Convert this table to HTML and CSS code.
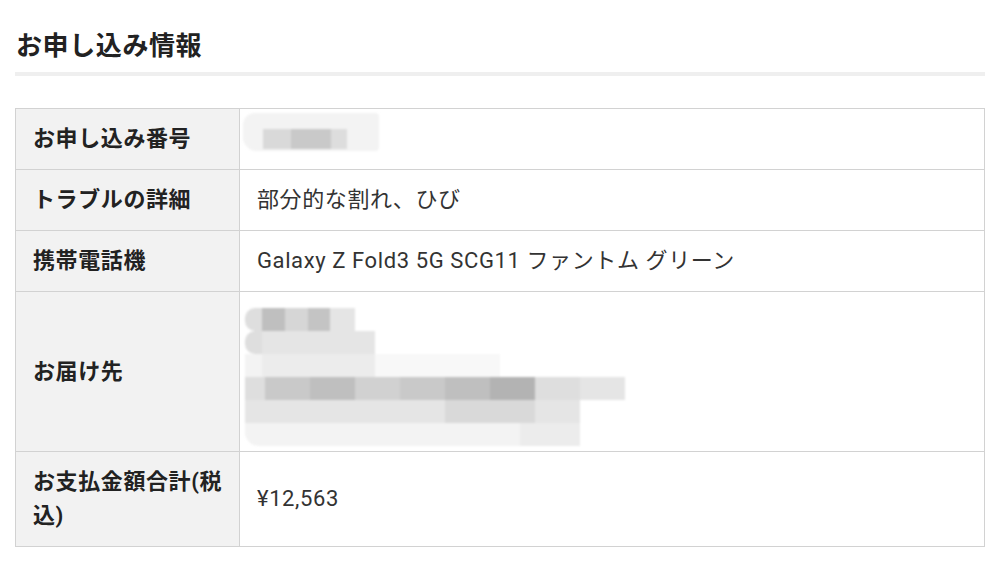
FILE: index.html
```html
<!DOCTYPE html>
<html lang="ja">
<head>
<meta charset="utf-8">
<title>お申し込み情報</title>
<link rel="stylesheet" href="styles.css">
</head>
<body>
<div class="page">
  <h1 class="title">お申し込み情報</h1>
  <table class="info">
    <tr>
      <th>お申し込み番号</th>
      <td class="masked">
        <div class="m1">
          <div class="m1-row"><span class="b w28 g1"></span><span class="b w40 g2"></span><span class="b w16 g3"></span></div>
        </div>
      </td>
    </tr>
    <tr>
      <th>トラブルの詳細</th>
      <td>部分的な割れ、ひび</td>
    </tr>
    <tr>
      <th>携帯電話機</th>
      <td>Galaxy Z Fold3 5G SCG11 ファントム グリーン</td>
    </tr>
    <tr>
      <th>お届け先</th>
      <td class="addr">
        <div class="mosaic">
          <div class="mrow"><span class="b w17 r l1"></span><span class="b w23 d3"></span><span class="b w23 d1"></span><span class="b w22 d2"></span><span class="b w25 l2"></span></div>
          <div class="mrow"><span class="b w17 r l1"></span><span class="b w113 l2"></span></div>
          <div class="mrow"><span class="b w17 l4"></span><span class="b w113 l3"></span><span class="b w125 l5"></span></div>
          <div class="mrow"><span class="b w20 l1"></span><span class="b w45 d4"></span><span class="b w45 d3"></span><span class="b w45 d5"></span><span class="b w45 d4"></span><span class="b w45 d3"></span><span class="b w45 d6"></span><span class="b w45 l1"></span><span class="b w45 l2"></span></div>
          <div class="mrow"><span class="b w200 l2"></span><span class="b w90 d7"></span><span class="b w45 l2"></span></div>
          <div class="mrow"><span class="b w275 r2 l4"></span><span class="b w60 l3"></span></div>
        </div>
      </td>
    </tr>
    <tr>
      <th>お支払金額合計(税込)</th>
      <td>¥12,563</td>
    </tr>
  </table>
</div>
</body>
</html>
```

FILE: styles.css
```css
html, body {
  margin: 0;
  padding: 0;
  background: #ffffff;
}

body {
  font-family: Roboto, "Noto Sans CJK JP", sans-serif;
  color: #333333;
}

.page {
  padding: 28px 14px 0 15px;
}

.title {
  margin: 0;
  font-size: 26px;
  letter-spacing: 0.6px;
  line-height: 36px;
  font-weight: 700;
  color: #222222;
  padding: 0 0 8px 1px;
  border-bottom: 4px solid #efefef;
}

.info {
  margin-top: 32px;
  width: 100%;
  border-collapse: collapse;
  border: 1px solid #d2d2d2;
}

.info th,
.info td {
  border: 1px solid #d2d2d2;
  padding: 13px 16px 13px 17px;
  font-size: 22px;
  letter-spacing: 0.6px;
  line-height: 34px;
  text-align: left;
  vertical-align: middle;
}

.info th {
  width: 190px;
  background: #f2f2f2;
  font-weight: 700;
  color: #222222;
}

.info td {
  background: #ffffff;
  font-weight: 400;
  color: #333333;
}

.info td.masked {
  padding: 4px 0 18px 3px;
}

.m1 {
  width: 136px;
  height: 38px;
  background: #f3f3f3;
  border-radius: 12px 4px 4px 14px;
  filter: blur(1.2px);
  display: flex;
  flex-direction: column;
  justify-content: flex-end;
  padding-bottom: 2px;
  box-sizing: border-box;
}

.m1-row {
  display: flex;
  margin-left: 20px;
  height: 20px;
}

.info td.addr {
  padding: 16px 0 5px 5px;
}

.mosaic {
  display: flex;
  flex-direction: column;
  filter: blur(0.8px);
}

.mrow {
  display: flex;
  height: 23px;
}

.b { display: block; height: 100%; }
.r { border-radius: 10px 0 0 10px; }
.r2 { border-radius: 0 0 0 14px; }

.w16 { width: 16px; }
.w17 { width: 17px; }
.w20 { width: 20px; }
.w22 { width: 22px; }
.w23 { width: 23px; }
.w25 { width: 25px; }
.w28 { width: 28px; }
.w40 { width: 40px; }
.w45 { width: 45px; }
.w60 { width: 60px; }
.w90 { width: 90px; }
.w113 { width: 113px; }
.w125 { width: 125px; }
.w200 { width: 200px; }
.w275 { width: 275px; }

.g1 { background: #d9d9d9; }
.g2 { background: #c9c9c9; }
.g3 { background: #dddddd; }

.d1 { background: #d6d6d6; }
.d2 { background: #c4c4c4; }
.d3 { background: #bfbfbf; }
.d4 { background: #c9c9c9; }
.d5 { background: #d1d1d1; }
.d6 { background: #b3b3b3; }
.d7 { background: #d9d9d9; }

.l1 { background: #dedede; }
.l2 { background: #e5e5e5; }
.l3 { background: #ececec; }
.l4 { background: #f3f3f3; }
.l5 { background: #f8f8f8; }
```
